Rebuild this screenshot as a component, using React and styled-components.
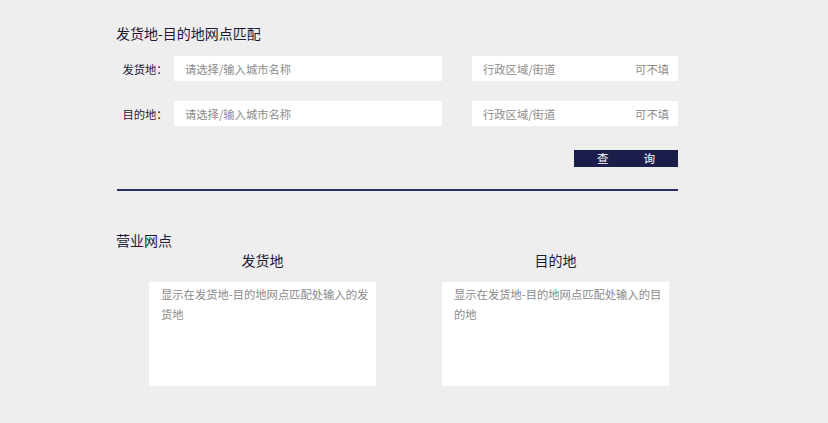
import React from 'react';
import styled, { createGlobalStyle } from 'styled-components';

const GlobalStyle = createGlobalStyle`
  html, body {
    margin: 0;
    padding: 0;
    background: #eeeeee;
  }
  body {
    font-family: "Noto Sans CJK SC", "Microsoft YaHei", sans-serif;
    color: #1c1c38;
  }
`;

const Page = styled.div`
  width: 562px;
  padding: 23px 0 0 116px;
`;

const Title = styled.h2`
  margin: 0;
  font-size: 14px;
  font-weight: normal;
  line-height: 20px;
  color: #1a1a35;
`;

const Form = styled.div`
  display: flex;
  flex-direction: column;
  gap: 20px;
  margin-top: 13px;
`;

const Row = styled.div`
  display: flex;
  align-items: center;
`;

const Label = styled.label`
  width: 58px;
  text-align: center;
  font-size: 11.3px;
  color: #1c1c38;
`;

const Field = styled.div`
  display: flex;
  align-items: center;
  justify-content: space-between;
  box-sizing: border-box;
  width: ${p => p.$w}px;
  height: 25px;
  margin-left: ${p => p.$ml || 0}px;
  padding: 0 9px 0 11px;
  background: #ffffff;
  font-size: 11.3px;
  color: #8c8c8c;
`;

const Hint = styled.span`
  color: #8c8c8c;
`;

const Actions = styled.div`
  display: flex;
  justify-content: flex-end;
  margin-top: 24px;
`;

const SearchButton = styled.button`
  display: flex;
  justify-content: center;
  align-items: center;
  gap: 35px;
  width: 104px;
  height: 17px;
  padding: 0;
  border: 0;
  background: #1b1e4b;
  color: #ffffff;
  font-family: inherit;
  font-size: 11.5px;
  line-height: 17px;
  cursor: pointer;
`;

const Divider = styled.hr`
  margin: 22px 0 0 1px;
  border: 0;
  height: 2px;
  background: #2b2f63;
`;

const SectionTitle = styled.h3`
  margin: 39px 0 0;
  font-size: 14px;
  font-weight: normal;
  line-height: 20px;
  color: #1a1a35;
`;

const Columns = styled.div`
  display: flex;
  gap: 66px;
  padding-left: 33px;
`;

const Column = styled.div`
  width: 227px;
  display: flex;
  flex-direction: column;
`;

const ColumnHead = styled.div`
  text-align: center;
  font-size: 14px;
  line-height: 20px;
  color: #1a1a35;
`;

const ResultBox = styled.div`
  box-sizing: border-box;
  height: 104px;
  margin-top: 12px;
  padding: 2px 5px 0 12px;
  background: #ffffff;
  font-size: 11.3px;
  line-height: 20px;
  color: #8a8a8a;
`;

export default function App() {
  return (
    <>
      <GlobalStyle />
      <Page>
        <Title>发货地-目的地网点匹配</Title>
        <Form>
          <Row>
            <Label>发货地：</Label>
            <Field $w={268}>请选择/输入城市名称</Field>
            <Field $w={206} $ml={30}>
              <span>行政区域/街道</span>
              <Hint>可不填</Hint>
            </Field>
          </Row>
          <Row>
            <Label>目的地：</Label>
            <Field $w={268}>请选择/输入城市名称</Field>
            <Field $w={206} $ml={30}>
              <span>行政区域/街道</span>
              <Hint>可不填</Hint>
            </Field>
          </Row>
        </Form>
        <Actions>
          <SearchButton>
            <span>查</span>
            <span>询</span>
          </SearchButton>
        </Actions>
        <Divider />
        <SectionTitle>营业网点</SectionTitle>
        <Columns>
          <Column>
            <ColumnHead>发货地</ColumnHead>
            <ResultBox>显示在发货地-目的地网点匹配处输入的发货地</ResultBox>
          </Column>
          <Column>
            <ColumnHead>目的地</ColumnHead>
            <ResultBox>显示在发货地-目的地网点匹配处输入的目的地</ResultBox>
          </Column>
        </Columns>
      </Page>
    </>
  );
}
